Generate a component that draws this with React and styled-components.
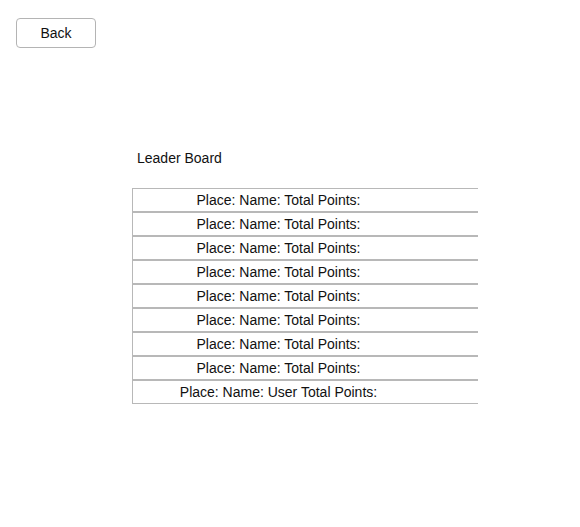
import React from 'react'
import styled, { createGlobalStyle } from 'styled-components'

const GlobalStyle = createGlobalStyle`
  body {
    margin: 0;
    background: #fff;
    font-family: "Liberation Sans", Arial, sans-serif;
    color: #111;
  }
`

const Page = styled.div`
  padding: 18px 0 0 16px;
`

const BackButton = styled.button`
  display: block;
  width: 80px;
  height: 30px;
  background: #fff;
  border: 1px solid #b4b4b4;
  border-radius: 4px;
  font-family: inherit;
  font-size: 14px;
  color: #111;
  cursor: pointer;
`

const Board = styled.section`
  margin: 102px 0 0 116px;
  width: 346px;
`

const Title = styled.h2`
  margin: 0 0 22px;
  padding-left: 5px;
  font-size: 14px;
  font-weight: normal;
  line-height: 16px;
`

const Row = styled.div`
  height: 22px;
  border-left: 1px solid #b8b8b8;
  border-top: 1px solid #b8b8b8;
  border-bottom: 1px solid #b8b8b8;
`

const Cell = styled.div`
  width: 291px;
  text-align: center;
  font-size: 14px;
  line-height: 22px;
`

const rows = Array.from({ length: 8 }, () => 'Place: Name: Total Points:')

const App = () => (
  <>
    <GlobalStyle />
    <Page>
      <BackButton>Back</BackButton>
      <Board>
        <Title>Leader Board</Title>
        {rows.map((text, i) => (
          <Row key={i}>
            <Cell>{text}</Cell>
          </Row>
        ))}
        <Row>
          <Cell>Place: Name: User Total Points:</Cell>
        </Row>
      </Board>
    </Page>
  </>
)

export default App
